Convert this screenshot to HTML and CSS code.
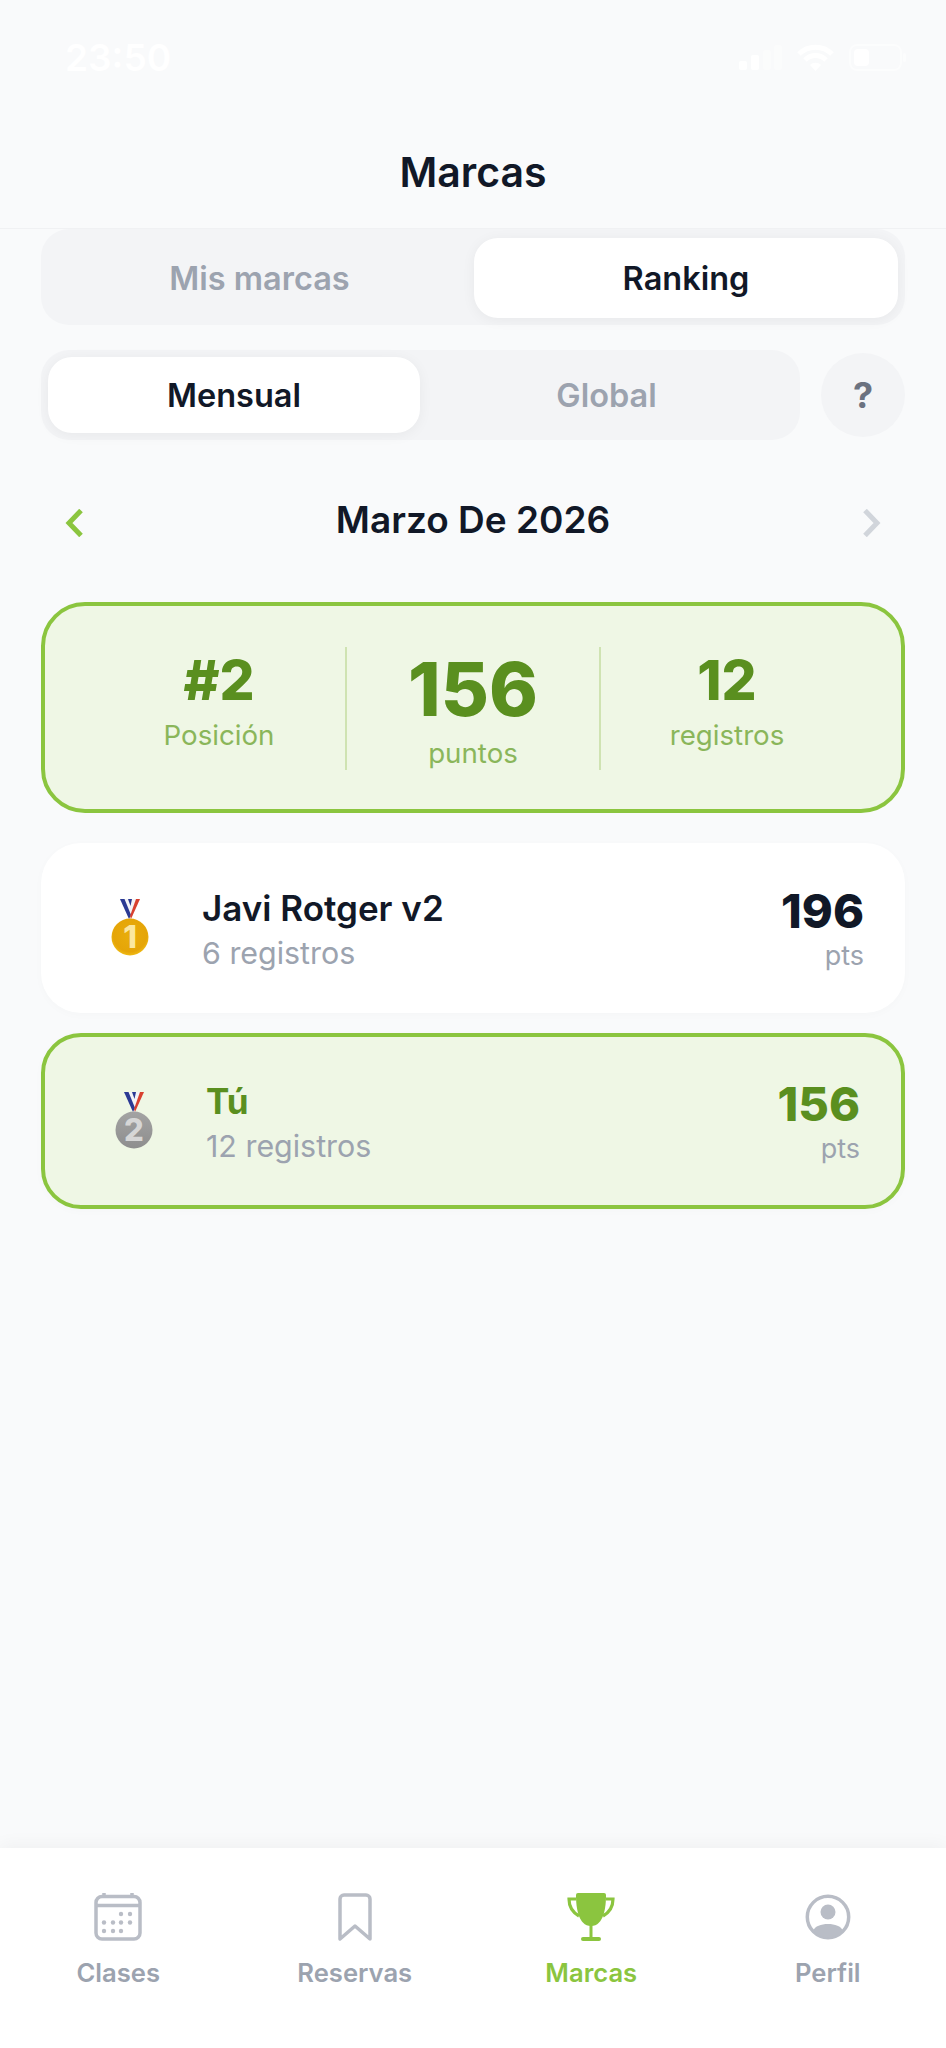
FILE: index.html
```html
<!DOCTYPE html>
<html>
<head>
  <title>Marcas</title>
  <meta charset="utf-8">
  <link rel="stylesheet" href="styles.css">
</head>
<body>
  <div class="page">
    <header class="top">
      <div class="status-bar">
        <span class="clock">23:50</span>
        <div class="status-icons">
          <svg width="43" height="25" viewBox="0 0 43 25" fill="#fff">
            <rect x="0" y="16" width="8" height="9" rx="2"/>
            <rect x="12" y="10" width="8" height="15" rx="2"/>
            <rect x="24" y="5" width="8" height="20" rx="2" opacity=".35"/>
            <rect x="35" y="0" width="8" height="25" rx="2" opacity=".35"/>
          </svg>
          <svg width="37" height="29" viewBox="0 0 37 29" fill="none" stroke="#fff" stroke-width="5">
            <path d="M2 11 C11 2 26 2 35 11"/>
            <path d="M8 17 C14 11 23 11 29 17"/>
            <path d="M18.5 28 L13 22 C16 19 21 19 24 22 Z" fill="#fff" stroke="none"/>
          </svg>
          <svg width="58" height="27" viewBox="0 0 58 27" fill="none">
            <rect x="1" y="1" width="51" height="25" rx="7" stroke="#fff" stroke-width="2" opacity=".5"/>
            <rect x="5" y="5" width="15" height="17" rx="4" fill="#fff"/>
            <rect x="54" y="9" width="3" height="9" rx="1.5" fill="#fff" opacity=".5"/>
          </svg>
        </div>
      </div>
      <h1>Marcas</h1>
    </header>

    <main class="content">
      <div class="tabs tabs-main">
        <div class="tab">Mis marcas</div>
        <div class="tab active">Ranking</div>
      </div>

      <div class="period-row">
        <div class="tabs tabs-period">
          <div class="tab active">Mensual</div>
          <div class="tab">Global</div>
        </div>
        <div class="help">?</div>
      </div>

      <div class="month-row">
        <svg class="chevron" width="18" height="28" viewBox="0 0 18 28" fill="none" stroke="#8bc53f" stroke-width="5">
          <path d="M16 1.5 L4 14 L16 26.5"/>
        </svg>
        <div class="month">Marzo De 2026</div>
        <svg class="chevron" width="18" height="28" viewBox="0 0 18 28" fill="none" stroke="#d1d5db" stroke-width="5">
          <path d="M2 1.5 L14 14 L2 26.5"/>
        </svg>
      </div>

      <div class="summary">
        <div class="stat">
          <div class="stat-num">#2</div>
          <div class="stat-label">Posición</div>
        </div>
        <div class="stat stat-main">
          <div class="stat-num">156</div>
          <div class="stat-label">puntos</div>
        </div>
        <div class="stat">
          <div class="stat-num">12</div>
          <div class="stat-label">registros</div>
        </div>
      </div>

      <div class="rank-row">
        <svg class="medal" width="40" height="60" viewBox="0 0 40 60">
          <defs>
            <radialGradient id="gold" cx="0.5" cy="0.45" r="0.6">
              <stop offset="0" stop-color="#e9ad0c"/>
              <stop offset="0.75" stop-color="#e5a508"/>
              <stop offset="1" stop-color="#f5c61a"/>
            </radialGradient>
          </defs>
          <path d="M10 1 H30 L21 21 H19 Z" fill="#f4f4f6"/>
          <path d="M10 1 H14.5 L21 17 L19 21 Z" fill="#2b3a93"/>
          <path d="M18 1 H22 L20.5 8 Z" fill="#2b3a93"/>
          <path d="M30 1 H26 L20 18 L21 21 Z" fill="#d8412f"/>
          <circle cx="20" cy="39" r="18.5" fill="url(#gold)"/>
          <text class="medal-num gold-num" x="20" y="50">1</text>
        </svg>
        <div class="rank-info">
          <div class="rank-name">Javi Rotger v2</div>
          <div class="rank-sub">6 registros</div>
        </div>
        <div class="rank-score">
          <div class="rank-pts">196</div>
          <div class="rank-unit">pts</div>
        </div>
      </div>

      <div class="rank-row me">
        <svg class="medal" width="40" height="60" viewBox="0 0 40 60">
          <defs>
            <linearGradient id="silver" x1="0" y1="0" x2="0" y2="1">
              <stop offset="0" stop-color="#a3a3a3"/>
              <stop offset="1" stop-color="#8e8e8e"/>
            </linearGradient>
          </defs>
          <path d="M10 1 H30 L21 21 H19 Z" fill="#f4f4f6"/>
          <path d="M10 1 H14.5 L21 17 L19 21 Z" fill="#2b3a93"/>
          <path d="M18 1 H22 L20.5 8 Z" fill="#2b3a93"/>
          <path d="M30 1 H26 L20 18 L21 21 Z" fill="#d8412f"/>
          <circle cx="20" cy="39" r="18.5" fill="url(#silver)"/>
          <text class="medal-num silver-num" x="20" y="50">2</text>
        </svg>
        <div class="rank-info">
          <div class="rank-name">Tú</div>
          <div class="rank-sub">12 registros</div>
        </div>
        <div class="rank-score">
          <div class="rank-pts">156</div>
          <div class="rank-unit">pts</div>
        </div>
      </div>
    </main>

    <nav class="bottom-nav">
      <div class="nav-item">
        <svg width="48" height="48" viewBox="0 0 48 48" fill="none" stroke="#b9bdc6" stroke-width="3.5">
          <rect x="2" y="3.5" width="44" height="42.5" rx="6"/>
          <path d="M2 12.5 H46"/>
          <path d="M10 0 V4 M38 0 V4"/>
          <g fill="#b9bdc6" stroke="none">
            <circle cx="27" cy="21" r="2.2"/><circle cx="36" cy="21" r="2.2"/>
            <circle cx="10" cy="29.5" r="2.2"/><circle cx="19" cy="29.5" r="2.2"/><circle cx="27" cy="29.5" r="2.2"/><circle cx="36" cy="29.5" r="2.2"/>
            <circle cx="10" cy="38" r="2.2"/><circle cx="19" cy="38" r="2.2"/><circle cx="27" cy="38" r="2.2"/>
          </g>
        </svg>
        <span>Clases</span>
      </div>
      <div class="nav-item">
        <svg width="34" height="48" viewBox="0 0 34 48" fill="none" stroke="#b9bdc6" stroke-width="3.5" stroke-linejoin="round">
          <path d="M2 46 V6 A4 4 0 0 1 6 2 H28 A4 4 0 0 1 32 6 V46 L17 33 Z"/>
        </svg>
        <span>Reservas</span>
      </div>
      <div class="nav-item active">
        <svg width="48" height="48" viewBox="0 0 48 48" fill="#8bc53f">
          <path d="M11 0 H37 Q39 0 39 2 C39 14 37 33 24 33 C11 33 9 14 9 2 Q9 0 11 0 Z"/>
          <path d="M9 6 H2 C2 14 5 19 12 23 M39 6 H46 C46 14 43 19 36 23" fill="none" stroke="#8bc53f" stroke-width="3.2"/>
          <rect x="22.5" y="32" width="3" height="13"/>
          <rect x="14" y="44" width="20" height="4" rx="2"/>
        </svg>
        <span>Marcas</span>
      </div>
      <div class="nav-item">
        <svg width="46" height="48" viewBox="0 0 46 48" fill="#b9bdc6">
          <circle cx="23" cy="24" r="20.7" fill="none" stroke="#b9bdc6" stroke-width="3.5"/>
          <circle cx="23" cy="19" r="7.5"/>
          <path d="M8 38 C10 33 16 31 23 31 S36 33 38 38 A21 21 0 0 1 8 38 Z"/>
        </svg>
        <span>Perfil</span>
      </div>
    </nav>
  </div>
</body>
</html>
```

FILE: styles.css
```css
body {
  margin: 0;
  font-family: Inter, 'Liberation Sans', sans-serif;
  color: #111827;
  background: #f9fafb;
}

.page {
  display: flex;
  flex-direction: column;
  height: 2048px;
  overflow: hidden;
}

.top {
  height: 229px;
  box-sizing: border-box;
  border-bottom: 1px solid #f0f1f3;
  padding-top: 42px;
}

.status-bar {
  display: flex;
  justify-content: space-between;
  align-items: center;
  height: 30px;
  padding: 0 39px 0 65px;
}

.clock {
  color: #fff;
  font-size: 37px;
  font-weight: 600;
}

.status-icons {
  display: flex;
  align-items: center;
  gap: 15px;
}

h1 {
  margin: 76px 0 0;
  font-size: 41px;
  line-height: 48px;
  font-weight: 600;
  text-align: center;
}

.content {
  flex: 1;
  padding: 0 41px;
}

.tabs {
  display: flex;
  background: #f3f4f6;
  box-sizing: border-box;
}

.tab {
  flex: 1;
  display: flex;
  align-items: center;
  justify-content: center;
  color: #9ca3af;
  font-size: 32.5px;
  font-weight: 600;
}

.tab.active {
  background: #fff;
  color: #111827;
  box-shadow: 0 2px 14px rgba(0, 0, 0, 0.05);
}

.tabs-main {
  height: 96px;
  padding: 9px 7px 7px 4px;
  border-radius: 28px;
}

.tabs-main .tab:first-child {
  flex: none;
  width: 429px;
}

.tabs-main .tab.active {
  border-radius: 24px;
}

.period-row {
  display: flex;
  align-items: center;
  gap: 21px;
  margin-top: 25px;
}

.tabs-period {
  flex: 1;
  height: 90px;
  padding: 7px;
  border-radius: 28px;
}

.tabs-period .tab.active {
  flex: none;
  width: 372px;
  border-radius: 24px;
}

.help {
  width: 84px;
  height: 84px;
  border-radius: 50%;
  background: #f3f4f6;
  color: #6b7280;
  font-size: 36px;
  font-weight: 700;
  display: flex;
  align-items: center;
  justify-content: center;
}

.month-row {
  display: flex;
  align-items: center;
  justify-content: space-between;
  height: 50px;
  margin-top: 54px;
  padding: 0 24px;
}

.chevron {
  margin-top: 8px;
}

.month {
  font-size: 37px;
  font-weight: 600;
}

.summary {
  display: flex;
  margin-top: 58px;
  padding: 41px 48px 39px;
  background: #eff7e5;
  border: 4px solid #8bc53f;
  border-radius: 44px;
}

.stat {
  flex: 1;
  height: 123px;
  text-align: center;
  color: #5a8f1f;
}

.stat + .stat {
  border-left: 2px solid #cfe3b2;
}

.stat-num {
  font-size: 55px;
  line-height: 66px;
  font-weight: 800;
}

.stat-label {
  margin-top: 5px;
  color: #8ab65a;
  font-size: 27.7px;
  line-height: 34px;
}

.stat-main .stat-num {
  font-size: 74px;
  line-height: 84px;
}

.rank-row {
  display: flex;
  align-items: center;
  height: 170px;
  box-sizing: border-box;
  margin-top: 30px;
  padding: 0 41px;
  background: #fff;
  border-radius: 40px;
  box-shadow: 0 2px 10px rgba(0, 0, 0, 0.02);
}

.rank-row.me {
  height: 176px;
  margin-top: 20px;
  background: #eff7e5;
  border: 4px solid #8bc53f;
}

.medal {
  width: 40px;
  margin: 0 52px 0 28px;
  flex: none;
}

.medal-num {
  font-family: Inter, sans-serif;
  font-size: 31px;
  font-weight: 800;
  text-anchor: middle;
}

.gold-num {
  fill: #fbe7a0;
}

.silver-num {
  fill: #d6d6d6;
}

.rank-info {
  flex: 1;
}

.rank-name {
  font-size: 35px;
  line-height: 46px;
  font-weight: 600;
}

.me .rank-name {
  color: #5a8f1f;
  font-weight: 700;
}

.rank-sub {
  margin-top: 3px;
  color: #9ca3af;
  font-size: 30.4px;
  line-height: 38px;
}

.rank-score {
  margin-top: 3px;
  text-align: right;
}

.rank-pts {
  font-size: 47px;
  line-height: 50px;
  font-weight: 800;
}

.me .rank-pts {
  color: #5a8f1f;
}

.rank-unit {
  margin-top: 3px;
  color: #9ca3af;
  font-size: 27px;
  line-height: 34px;
}

.bottom-nav {
  display: grid;
  grid-template-columns: repeat(4, 1fr);
  height: 200px;
  box-sizing: border-box;
  padding-top: 45px;
  background: #fff;
  box-shadow: 0 -4px 16px rgba(0, 0, 0, 0.04);
}

.nav-item {
  display: flex;
  flex-direction: column;
  align-items: center;
  gap: 16px;
  color: #9ca3af;
  font-size: 25.6px;
  font-weight: 600;
}

.nav-item.active {
  color: #8bc53f;
}
```
